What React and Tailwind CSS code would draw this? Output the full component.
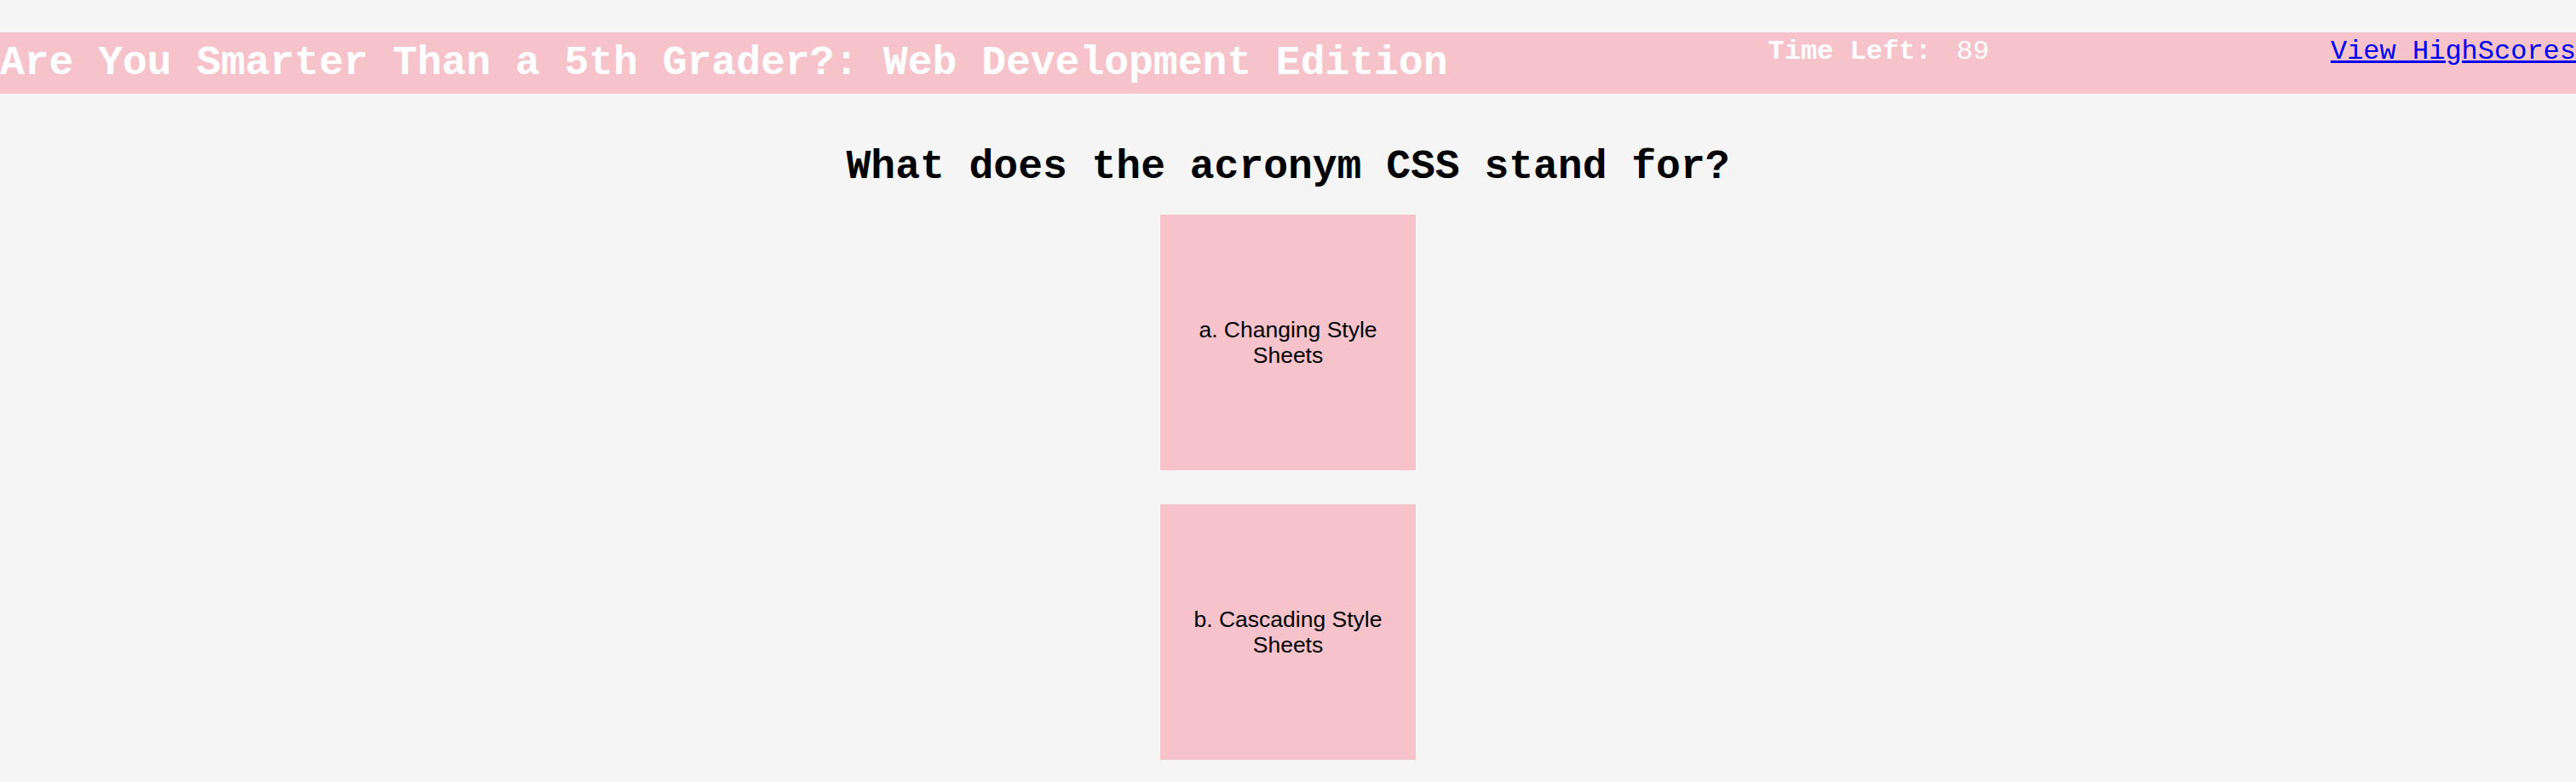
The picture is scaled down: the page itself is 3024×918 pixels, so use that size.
import React, { useState } from 'react';

const answers = [
    { id: 'a', text: 'a. Changing Style Sheets' },
    { id: 'b', text: 'b. Cascading Style Sheets' },
];

function App() {
    const [timeLeft] = useState(89);

    return (
        <div className="min-h-screen bg-[#f5f5f5] pt-[38px] font-['Liberation_Mono','Courier_New',monospace]">
            {/* Barra do topo */}
            <header className="flex items-start h-[72px] bg-[#f6c3cb] whitespace-nowrap overflow-hidden">
                <h1 className="text-[48px] leading-[72px] font-bold text-white">
                    Are You Smarter Than a 5th Grader?: Web Development Edition
                </h1>
                <div className="ml-[376px] mt-[5px] text-[32px] leading-[36px] text-white">
                    <span className="font-bold">Time Left:</span>
                    <span className="ml-[10px]"> {timeLeft}</span>
                </div>
                <a href="#" className="ml-auto mt-[5px] text-[32px] leading-[36px] text-[#0000ee] underline">
                    View HighScores
                </a>
            </header>

            <main className="flex flex-col items-center">
                <h2 className="mt-[59px] text-[48px] leading-[54px] font-bold text-black">
                    What does the acronym CSS stand for?
                </h2>
                <div className="mt-[29px] flex flex-col gap-[40px]">
                    {answers.map((answer) => (
                        <button
                            key={answer.id}
                            className="w-[300px] h-[300px] bg-[#f6c3cb] flex items-center justify-center text-center px-[16px] font-['Liberation_Sans',Arial,sans-serif] text-[26.5px] leading-[30.4px] text-black"
                        >
                            {answer.text}
                        </button>
                    ))}
                </div>
            </main>
        </div>
    );
}

export default App;
